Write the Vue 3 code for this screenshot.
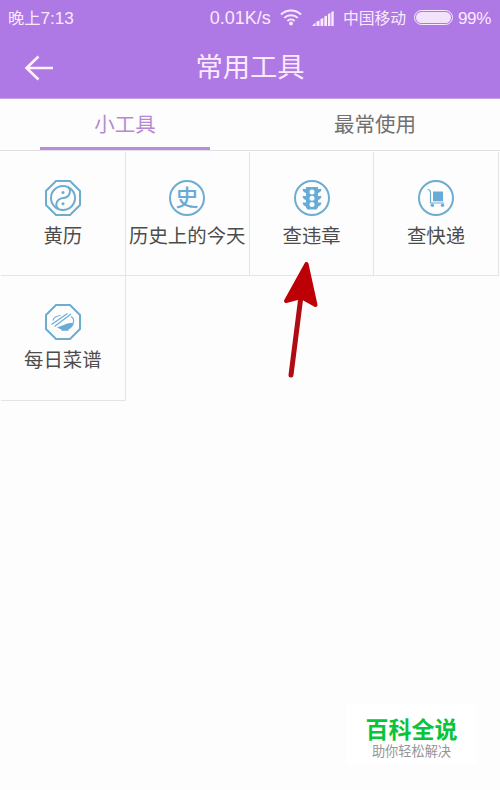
<template>
  <div class="screen">
    <header class="header">
      <div class="status-bar">
        <span class="time"><span class="cjk">晚上</span>7:13</span>
        <span class="speed">0.01K/s</span>
        <svg class="wifi" viewBox="0 0 22 17">
          <path d="M1 5.5C6.5 0.2 15.500 0.200 21 5.500" />
          <path d="M4.200 8.900C8 5.200 14 5.200 17.800 8.900" />
          <path d="M7.400 12C9.500 10 12.500 10 14.600 12" />
          <circle cx="11" cy="14.500" r="1.900" />
        </svg>
        <svg class="signal" viewBox="0 0 22 15">
          <path
            v-for="(bar, i) in signalBars"
            :key="i"
            :d="bar"
          />
        </svg>
        <span class="carrier">中国移动</span>
        <span class="battery"><span class="battery-level"></span></span>
        <span class="percent">99%</span>
      </div>
      <div class="title-bar">
        <svg class="back" viewBox="0 0 30 26">
          <path d="M14.500 1.500L2.500 13L14.500 24.500M2.500 13H29" />
        </svg>
        <h1 class="title">常用工具</h1>
      </div>
    </header>

    <nav class="tabs">
      <button
        v-for="tab in tabs"
        :key="tab"
        class="tab"
        :class="{ active: tab === activeTab }"
        @click="activeTab = tab"
      >
        <span class="tab-label">{{ tab }}</span>
      </button>
    </nav>

    <main class="grid">
      <div
        v-for="tool in tools"
        :key="tool.icon"
        class="tool"
      >
        <svg class="tool-icon" viewBox="0 0 36 36">
          <path
            v-if="tool.octagon"
            class="ring"
            d="M11 1H25L35 11V25L25 35H11L1 25V11Z"
          />
          <circle v-else class="ring" cx="18" cy="18" r="17" />

          <g v-if="tool.icon === 'calendar'">
            <circle class="line" cx="18" cy="18" r="12" />
            <path class="line" d="M22.500 6.900C27 10 25 17.500 18.500 18C12 18.500 9 25 13.500 29.100" />
            <circle class="fill" cx="18" cy="12.500" r="1.500" />
            <circle class="fill" cx="18" cy="23.800" r="1.500" />
          </g>
          <text v-else-if="tool.icon === 'history'" class="glyph" x="18" y="26.200">史</text>
          <g v-else-if="tool.icon === 'traffic'">
            <path class="fill" d="M12 7H24V9H27.500Q27 12.500 24 13V16H27.500Q27 19.500 24 20V22.500H27.500Q27 26 24 26.500V27.500L22.500 29.500H13.500L12 27.500V26.500Q9 26 8.500 22.500H12V20Q9 19.500 8.500 16H12V13Q9 12.500 8.500 9H12Z" />
            <circle class="hole" cx="18" cy="12" r="2.500" />
            <circle class="hole" cx="18" cy="18.200" r="2.500" />
            <circle class="hole" cx="18" cy="24.400" r="2.500" />
          </g>
          <g v-else-if="tool.icon === 'express'">
            <path class="thin" d="M9.500 9.500Q12.500 9.500 12.500 12.500V23H26" />
            <rect class="fill" x="15" y="11.500" width="10" height="9.800" />
            <circle class="fill" cx="14.300" cy="25.200" r="1.700" />
            <circle class="fill" cx="24.500" cy="25.200" r="1.700" />
          </g>
          <g v-else>
            <path class="fill" d="M12 23C18 22.500 20 18.800 28.800 18.800C28.500 22 26.500 24 23.500 25.500V26.800H16.500V25.500Q13.500 24.800 12 23Z" />
            <path class="thin" d="M6.500 20.500L22.500 9.500M9.500 22.500L26 10" />
            <path class="thin" d="M8 16.500C8.500 13.500 11 12 15.500 11.500M26 12.500C28.500 14 29 16.500 28.300 18.800" />
          </g>
        </svg>
        <span class="tool-name">{{ tool.name }}</span>
      </div>
    </main>

    <svg class="pointer" viewBox="0 0 60 140">
      <path class="pointer-shaft" d="M30.500 50L21 125" />
      <path class="pointer-head" d="M36.500 14L16 51L31 47L45.500 55Z" />
    </svg>

    <aside class="watermark">
      <strong class="brand">百科全说</strong>
      <span class="slogan">助你轻松解决</span>
    </aside>
  </div>
</template>

<script setup>
import { ref } from 'vue';

const tabs = ['小工具', '最常使用'];
const activeTab = ref('小工具');

const signalBars = [
  'M0 15L3.5 11.5V15Z',
  'M4.500 10.500L7.500 9.500V15H4.500Z',
  'M8.500 8L11.300 7V15H8.500Z',
  'M12.300 5.500L15 4.500V15H12.300Z',
  'M16 3L18.400 2V15H16Z',
  'M19.300 1L21.700 0V15H19.300Z'
];

const tools = [
  { name: '黄历', icon: 'calendar', octagon: true },
  { name: '历史上的今天', icon: 'history', octagon: false },
  { name: '查违章', icon: 'traffic', octagon: false },
  { name: '查快递', icon: 'express', octagon: false },
  { name: '每日菜谱', icon: 'recipe', octagon: true }
];
</script>

<style>
body {
  background: #fdfdfd;
}
</style>

<style scoped>
.screen {
  position: relative;
  box-sizing: border-box;
  width: 500px;
  height: 790px;
  overflow: hidden;
  background: #fdfdfd;
  font-family: "Liberation Sans", "Noto Sans CJK SC", sans-serif;
}

.header {
  height: 98px;
  background: #ae78e5;
  border-bottom: 1px solid #c7a2e3;
  color: #fbeaff;
}

.status-bar {
  display: flex;
  align-items: center;
  box-sizing: border-box;
  height: 36px;
  padding: 0 9px 0 8px;
  line-height: 35px;
  white-space: nowrap;
}

.time {
  flex: 1;
  padding-top: 1px;
  font-size: 17.2px;
}

.cjk {
  font-size: 16.2px;
}

.speed {
  margin-right: 9px;
  padding-top: 1px;
  font-size: 18px;
}

.wifi {
  width: 22px;
  height: 17px;
  margin: -1px 10px 0 0;
  fill: none;
  stroke: #fbeaff;
  stroke-width: 2;
}

.wifi circle {
  fill: #fbeaff;
  stroke: none;
}

.signal {
  width: 22px;
  height: 15px;
  margin-right: 9px;
  fill: #fbeaff;
}

.carrier {
  width: 63px;
  margin-right: 8px;
  font-size: 15.8px;
}

.battery {
  box-sizing: border-box;
  width: 39px;
  height: 15px;
  margin: -1px 5px 0 0;
  padding: 1px;
  border: 1px solid #fbeaff;
  border-radius: 8px;
}

.battery-level {
  display: block;
  height: 100%;
  border-radius: 6px;
  background: #f3e2fb;
}

.percent {
  font-size: 17px;
  letter-spacing: -0.3px;
}

.title-bar {
  display: grid;
  grid-template-columns: 60px 1fr 60px;
  align-items: center;
  height: 62px;
}

.back {
  width: 30px;
  height: 26px;
  margin-left: 24px;
  fill: none;
  stroke: #fff2ff;
  stroke-width: 2.6;
}

.title {
  margin: 0;
  font-size: 27.3px;
  font-weight: 400;
  line-height: 63px;
  text-align: center;
}

.tabs {
  display: grid;
  grid-template-columns: 1fr 1fr;
  height: 51px;
  border-bottom: 1px solid #e2e0e4;
}

.tab {
  display: flex;
  justify-content: center;
  padding: 0 40px;
  border: none;
  background: none;
  color: #707070;
  font-family: inherit;
  font-size: 20.5px;
  font-weight: 400;
  line-height: 52px;
  cursor: pointer;
}

.tab-label {
  box-sizing: border-box;
  width: 170px;
  height: 51px;
  border-bottom: 3px solid transparent;
}

.active {
  color: #b58ad2;
}

.active .tab-label {
  border-color: #ba8bda;
}

.grid {
  display: grid;
  grid-template-columns: repeat(4, 124.4px);
  grid-auto-rows: 124.3px;
  padding: 1px 0 0 1.2px;
}

.tool {
  display: flex;
  flex-direction: column;
  align-items: center;
  box-sizing: border-box;
  padding-top: 28px;
  border-right: 1px solid #e5e5e5;
  border-bottom: 1px solid #e5e5e5;
}

.tool-icon {
  width: 36px;
  height: 36px;
}

.ring,
.line,
.thin {
  fill: none;
  stroke: #6eacd0;
  stroke-width: 2;
}

.thin {
  stroke-width: 1.2;
}

.fill {
  fill: #67abd6;
}

.hole {
  fill: #f7ffff;
}

.glyph {
  fill: #67abd6;
  font-family: "Noto Sans CJK SC", sans-serif;
  font-size: 23px;
  font-weight: 500;
  text-anchor: middle;
}

.tool-name {
  margin-top: 5px;
  color: #4c4c4c;
  font-size: 19.4px;
  font-weight: 400;
  line-height: 30px;
  white-space: nowrap;
}

.pointer {
  position: absolute;
  top: 250px;
  left: 270px;
  width: 60px;
  height: 140px;
}

.pointer-shaft {
  fill: none;
  stroke: #b00b12;
  stroke-width: 5;
  stroke-linecap: round;
}

.pointer-head {
  fill: #bd0006;
  stroke: #bd0006;
  stroke-width: 4;
  stroke-linejoin: round;
}

.watermark {
  position: absolute;
  top: 704px;
  left: 347px;
  display: flex;
  flex-direction: column;
  align-items: center;
  box-sizing: border-box;
  width: 129px;
  height: 61px;
  padding-top: 13px;
  background: #fff;
}

.brand {
  color: #08c43b;
  font-size: 23px;
  font-weight: 700;
  line-height: 27px;
}

.slogan {
  color: #969696;
  font-size: 13.2px;
  line-height: 16px;
}
</style>
